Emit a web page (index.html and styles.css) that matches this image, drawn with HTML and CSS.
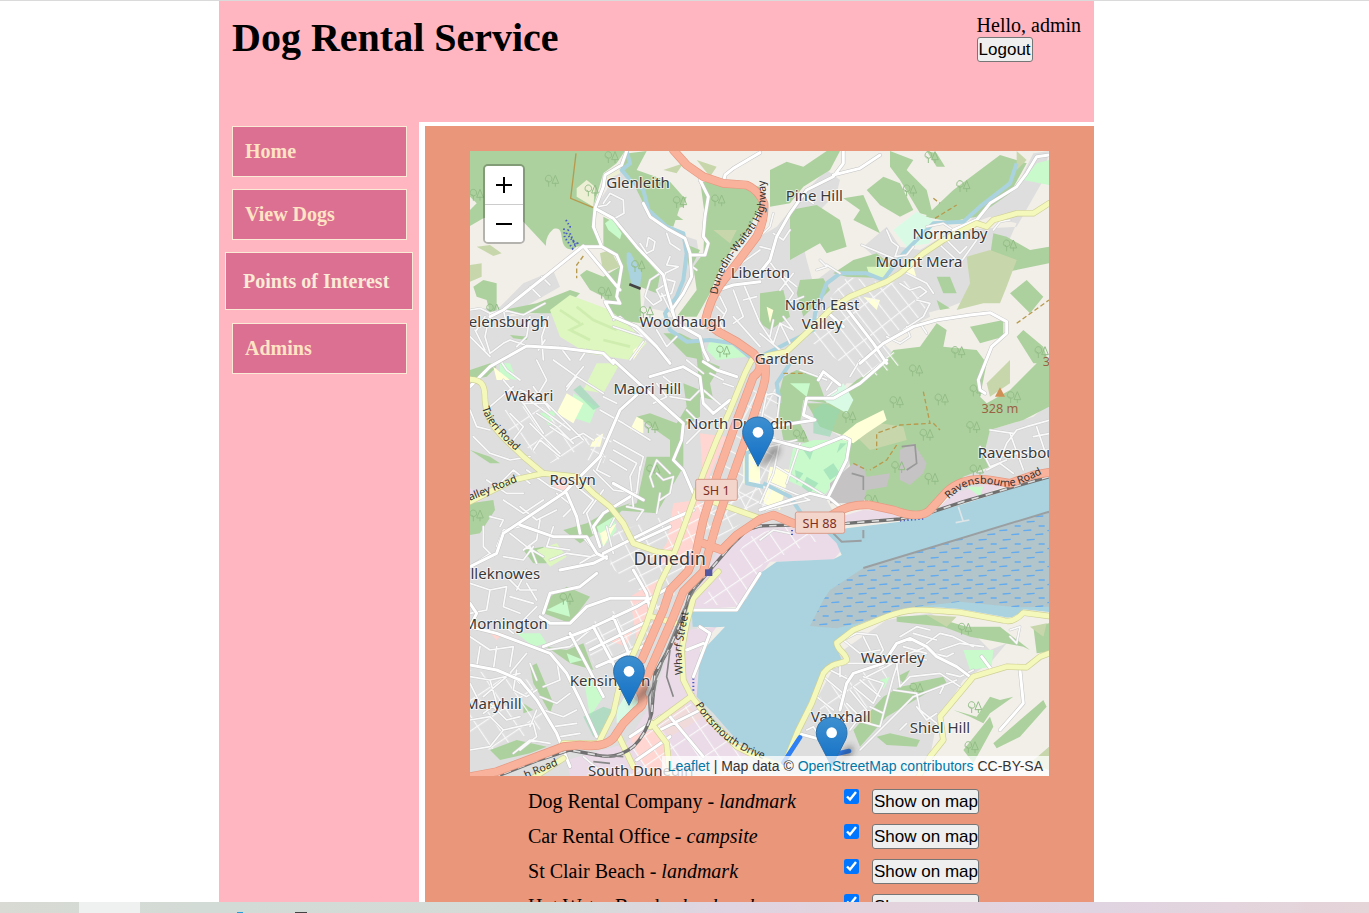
FILE: index.html
```html
<!DOCTYPE html>
<html lang="en">
<head>
<meta charset="utf-8">
<title>Dog Rental Service</title>
<link rel="stylesheet" href="styles.css">
</head>
<body>
<div class="viewport">
<div class="page">
  <header class="header">
    <h1 class="title">Dog Rental Service</h1>
    <form class="account">
      <span>Hello, admin</span>
      <button class="button" type="button">Logout</button>
    </form>
  </header>
  <nav class="nav">
    <a class="nav-item" href="#home">Home</a>
    <a class="nav-item" href="#dogs">View Dogs</a>
    <a class="nav-item nav-item-active" href="#poi">Points of Interest</a>
    <a class="nav-item" href="#admins">Admins</a>
  </nav>
  <main class="content">
    <div class="map">
      <svg class="tiles" viewBox="0 3 1737 1875" preserveAspectRatio="xMidYMid slice" role="img" aria-label="Map of Dunedin">
        <defs>
          <pattern id="gridA" width="62" height="36" patternUnits="userSpaceOnUse" patternTransform="rotate(-27)"><path class="block" d="M0 0H62M0 0V36"/></pattern>
          <pattern id="gridB" width="34" height="84" patternUnits="userSpaceOnUse" patternTransform="rotate(-38)"><path class="block" d="M0 0H34M0 0V84"/></pattern>
          <pattern id="gridC" width="48" height="44" patternUnits="userSpaceOnUse" patternTransform="rotate(-62)"><path class="block" d="M0 0H48M0 0V44"/></pattern>
          <pattern id="gridD" width="50" height="76" patternUnits="userSpaceOnUse" patternTransform="rotate(-34)"><path class="block" d="M0 0H50M0 0V76"/></pattern>
          <pattern id="mud" width="72" height="54" patternUnits="userSpaceOnUse"><path class="dash" d="M4 8l24-2M40 20l24-2M14 36l24-2M50 48h18"/></pattern>
          <linearGradient id="pinFill" x1="0" y1="0" x2="0" y2="1"><stop offset="0" stop-color="#3d8fcf"/><stop offset="1" stop-color="#126fc6"/></linearGradient>
          <filter id="soft" x="-50%" y="-50%" width="200%" height="200%"><feGaussianBlur stdDeviation="9"/></filter>
          <g id="pin">
            <path d="M0 0L34-50Q62-82 66-50Q58-20 0 0Z" fill="#222" opacity=".4" filter="url(#soft)"/>
            <path d="M0-150C-26-150-46-130-46-104C-46-94-43-84-38-76L0-2L38-76C43-84 46-94 46-104C46-130 26-150 0-150Z" fill="url(#pinFill)" stroke="#2c6fa8" stroke-width="3"/>
            <circle cy="-104" r="16" fill="#fff"/>
          </g>
          <g id="trees"><path d="M10 20V34M10 20L4 14M10 0C1 0-1 10 1 15C3 21 17 21 19 15C21 10 19 0 10 0ZM30 22V34M30 0L20 24H40Z"/></g>
          <g id="minor">
            <path d="M0 480L30 475 60 490 100 480 160 495 225 460M45 500L20 540M60 490L45 560 60 610 100 580 120 570 165 585M100 480L110 520 160 530 180 500 170 560 140 590M235 500L215 560 220 630M225 570L205 600M0 560L60 620M15 540L45 600M180 410L210 440M215 380L240 405M270 590L300 630M350 600L330 630M520 575L480 630M430 510L450 500 540 575 600 630M560 540L590 590 620 560M400 160L420 130 460 150 462 190 435 205 390 185M385 170L410 165 420 155M510 280L530 310 550 300 555 275 535 262 530 290M515 310L545 335M570 370L540 390 525 440 550 465 575 450 560 420 590 400 585 370 625 350 590 345 600 320M580 385L615 395 605 430 570 440M590 250L600 280 630 300M750 440L770 480 750 520 770 560 820 600M790 420L820 500 790 520M800 350L870 300M820 400L870 520M740 470L760 490M820 450L860 440M790 500L870 590M660 345L680 360M600 480L575 430M430 530L520 560"/>
            <g transform="translate(870 0)"><path d="M0 260L30 230 40 190M0 290L40 300M40 250L70 270 90 240M25 330L100 430 80 460 130 440M60 370L110 410M60 420L100 370M70 500L100 540 60 520 90 580M0 520L40 580 60 520M0 550L60 600M40 510L30 560M100 180L130 140 160 160 120 130M305 285L400 325M380 240L395 275 415 290 405 320 440 315 460 290M180 330L200 350 170 360M200 345L240 370M540 285L600 340 650 270M560 270L600 310 620 290M500 230L550 220 580 240M700 240L720 215 750 210M420 400L450 420 480 410 500 425 480 440M440 370L500 400 520 430M470 450L510 460 490 500 430 540M380 560L420 580 450 560 440 530M480 520L500 550"/></g>
            <g transform="translate(0 630)"><path d="M90 0L110 30 150 60M200 0L230 60 200 110 150 90M250 0L320 50 290 90M320 50L400 100M340 20L290 80M100 60L160 130 230 130M130 80L60 140M0 150L20 200 60 210M160 130L220 220M150 100L300 210M190 80L240 150M230 130L340 240M200 160L260 200 310 250M180 190L270 280M190 270L210 240 270 290M120 160L160 200 130 240M240 200L300 240 340 220 370 240M390 150L460 190 540 240M400 110L440 130M430 240L520 290 510 330M430 270L500 310 480 350M420 300L470 330M400 280L380 330 420 350M370 330L430 390 500 400 510 320M400 390L350 460 370 520M50 360L110 400 160 400M80 380L130 330 180 370M100 420L160 460 220 420M170 330L240 380 290 400M150 440L200 480 260 450M260 400L310 440 280 470M320 380L370 420 340 460M10 230L60 280 120 300 180 290M60 470L100 480 90 500M150 500L100 510 80 560M40 500L40 560 70 590M120 520L170 560 220 590M210 480L200 540 160 570M250 500L230 560 300 570M330 520L380 580 330 610M100 590L160 600 190 560M240 600L290 580 360 590 400 580M580 50L630 90M600 110L660 120 690 90M560 70L590 110 550 130M650 180L700 200 650 250M650 150L690 190M560 340L580 360 610 350 600 400 570 420M600 340L560 300 540 350 550 380M560 460L570 400M480 350L490 440M720 40L760 60M700 90L770 150M650 0L700 40M470 440L520 450 500 480M410 500L430 580M440 460L420 500M760 70L790 80M0 620L60 580M180 560L200 610"/></g>
            <g transform="translate(870 630)"><path d="M0 110L40 100 60 110 50 190M20 100L0 200M180 40L220 60 200 90M120 30L200 60M200 110L230 90M270 50L300 0M60 240L40 340 0 430M120 250L80 370M30 260L110 240M30 370L150 420 100 430 20 450M50 320L200 410M0 540L40 510 90 520M690 210L760 220M720 300L740 250 770 210 800 200 870 180M700 290L860 270M750 220L790 330M830 200L860 290M680 330L720 310 760 340M660 260L690 320 740 300M820 230L870 220"/></g>
            <g transform="translate(0 1260)"><path d="M0 40L60 60 110 50 100 110 150 130M60 60L50 120 0 130M100 10L150 60 200 60M170 0L140 60M120 80L190 100M0 200L60 240 130 230 120 290M30 230L20 290M80 230L70 300M170 250L120 310 150 340M180 280L200 330M0 320L60 330 150 310M60 330L80 400 40 430M140 300L130 360 170 380 200 360M0 450L60 440 100 480 60 530M100 480L190 460 200 500 150 540M60 530L0 540M60 400L110 450 150 440M210 380L260 400 300 370M220 420L280 440 320 420M250 470L320 460M270 500L330 490M220 350L270 330 260 270M230 240L300 230 360 180M130 550L180 510 240 520M200 420L180 470M0 340L30 400M160 150L200 110M200 90L170 40M80 150L130 190M340 560L400 610M110 320L40 380"/></g>
            <g transform="translate(870 1260)"><path d="M250 210L290 190 350 195 370 240 340 280M310 200L330 240M250 210L300 250 360 240M170 370L200 300 260 280 390 280M190 320L250 370M170 380L220 420M210 300L270 330M240 280L240 320M260 400L290 430M270 360L320 420M280 350L340 400 370 340 310 320M300 330L360 380M320 320L380 290 430 260 500 270M250 440L360 470 400 320 420 260 500 230M300 440L270 480M330 410L370 430M460 190L530 210M420 200L470 170 510 180M500 220L540 190 580 200 640 230M540 240L600 220 670 230M520 250L560 260 580 250M410 280L420 350 450 320 540 310 600 350M400 360L470 370 480 420 530 460M300 540L460 380 540 350 590 330M540 370L550 350M470 410L500 450 530 430M420 480L440 460M140 480L160 470 180 500M560 310L600 320M430 230L500 250M640 300L600 320M750 180L780 170 770 220 750 200"/></g>
          </g>
          <g id="local">
            <path d="M340 288L100 480 60 500M340 288L450 420M345 290L395 290 370 230 375 175 400 110 405 75 455 45 470 3M375 175L430 205 500 290 580 375 590 420 610 490M395 290L440 315 455 350 440 440 450 460 405 455 430 500 500 530 560 590 600 640M520 160L540 200 590 235 645 265 660 310 665 380 640 430 605 480 620 520 690 560 700 600 715 630M870 8L790 55 765 75 760 100M690 90L715 140 705 200 700 260 715 280 705 315 665 315M745 420L790 405 870 395M690 90L720 90M0 710L60 650 170 588 280 595 400 610 430 640M430 630L540 730 640 820 635 870 610 930 640 960 670 1030"/>
            <path d="M860 380L900 330 920 260 960 190 1010 120 1090 80 1120 40 1120 3M1090 75L1170 55 1230 15M1110 450L1210 580 1250 640M1060 475L1120 530M1170 640L1240 580 1330 530 1400 510 1500 495 1560 488 1610 515 1610 550 1565 590 1545 640 1525 690 1530 720 1545 730M1737 15L1700 20 1670 70 1640 110 1560 160 1520 210 1450 240"/>
            <path d="M1250 630L1170 700 1090 745 1010 745 1000 795 1035 810 900 830 870 850M1045 690L1060 665 1110 705M870 860L1020 900 1120 860 1140 870 1130 930 1075 1040M870 1080L1020 1030 1080 1045 1110 1070M500 735L450 780 420 850 390 920 330 980 280 1030 100 1150 80 1210 0 1250M290 1030L320 1100 330 1150M150 1125L250 1160 350 1160 380 1210 410 1225M480 1040L400 1090 370 1130 390 1190M410 1220L370 1240 270 1260M400 1210L600 1110 670 1080M490 1180L600 1130M430 1000L520 1050M540 680L640 650 690 680 700 760 730 790 780 750M700 635L740 660 800 680"/>
            <path d="M0 1430L80 1450 160 1480 240 1510 290 1570 330 1650 380 1760M0 1545L80 1560 150 1590 200 1650 260 1750 300 1850M210 1400L240 1420 300 1420 350 1370 420 1345 530 1345M220 1390L240 1330 330 1310 380 1270M220 1490L350 1440 500 1370 600 1310M0 1360L20 1390 0 1430M360 1500L520 1420M380 1550L540 1480M300 1450L400 1640M370 1430L440 1560M430 1400L480 1520M490 1260L530 1330 540 1380M480 1760L570 1700M500 1830L600 1760M570 1740L690 1680M600 1700L700 1820M655 1380L800 1380 870 1270M690 1430L720 1450 670 1580M650 1500L700 1480M985 1750L1040 1765 1110 1740M1110 1680L1130 1600 1150 1570 1240 1540 1280 1480 1320 1465 1370 1490 1400 1520 1460 1550 1500 1580M1650 1560L1660 1660 1590 1740M1535 1520L1565 1560"/>
          </g>
          <g id="secondary">
            <path d="M1737 160L1690 190 1640 190 1570 210 1550 230 1520 220 1460 250 1420 270 1360 310 1290 370 1250 395 1140 440 1080 480 1030 530 950 605 900 615 845 630 825 670 780 780 740 870 700 970 660 1080 620 1190 600 1240 570 1300 530 1420 500 1490 450 1600 430 1690 400 1750 385 1780 280 1780"/>
            <path d="M0 688C40 690 45 710 45 750C50 830 100 860 160 920L220 970 320 980 370 1030 420 1070 460 1120 490 1180 560 1205 600 1210M0 1055L130 990 220 970"/>
            <path d="M745 1265L670 1345 650 1420 635 1500 640 1590 665 1640 720 1710 800 1790 870 1825 940 1850 985 1740 1025 1660 1060 1570C1090 1530 1120 1545 1130 1530C1130 1510 1100 1500 1100 1478L1150 1440 1250 1400C1330 1370 1360 1380 1470 1387L1600 1411Q1630 1420 1660 1388Q1690 1392 1737 1398"/>
            <path d="M1340 1890L1380 1820 1420 1770 1410 1700 1510 1580 1610 1550 1670 1552 1710 1520 1737 1510M545 1400L635 1425M540 1730L665 1638M545 1720L590 1780 600 1880M440 1745L490 1850M715 1050L870 1105M180 1890L280 1825"/>
          </g>
          <g id="trunk">
            <path d="M610 0L650 45 700 80 760 100 830 105Q865 120 882 160Q885 210 860 260L800 340 750 405Q720 450 705 515L745 545 800 575 850 610Q890 650 850 680L790 840 740 980 700 1110 680 1200 655 1262 600 1320 580 1380 515 1530"/>
            <path d="M885 640Q890 680 880 710L830 860 780 1000 740 1120 720 1190 700 1265 640 1325 610 1400 540 1560 512 1630Q530 1660 500 1680L460 1720 430 1765Q400 1795 330 1785L280 1790 200 1820 80 1865 0 1880M700 1180L755 1200 800 1155 870 1108 910 1095 970 1120 1060 1115Q1120 1060 1200 1065L1270 1080Q1350 1110 1380 1080L1430 1025Q1480 980 1560 990L1620 1000 1690 975 1737 967"/>
          </g>
        </defs>

        <rect width="1737" height="1880" fill="#f2efe9"/>

        <!-- built-up land -->
        <g class="urban">
          <path d="M0 480L90 470 160 400 250 362 270 410 210 445 110 500 300 480 420 600 520 520 600 500 700 540 740 430 800 330 870 260 920 230 1010 120 1070 60 1110 90 1100 130 990 240 1010 330 1030 400 1000 420 1080 360 1140 370 1260 360 1370 350 1400 420 1370 460 1380 500 1300 540 1240 580 1300 640 1190 700 1130 700 1080 770 1060 830 1130 870 1140 940 1070 1050 1110 1120 870 1140 830 1340 680 1400 700 1640 870 1820 990 1740 1120 1500 1250 1410 1380 1390 1440 1420 1500 1440 1560 1500 1610 1480 1560 1540 1480 1590 1400 1720 1370 1870 0 1880Z"/>
          <path d="M370 180L410 120 440 50 500 100 530 170 590 240 680 270 690 330 665 400 610 490 520 470 530 410 570 370 480 270 430 210ZM1180 290L1250 230 1290 290 1350 300 1450 240 1560 200 1640 220 1600 310 1510 340 1540 430 1440 470 1330 500 1280 380ZM1560 840L1690 800 1737 760 1737 960 1600 990 1390 1050 1400 1020 1480 970 1560 960 1540 900ZM1470 240L1640 230 1720 90 1737 3 1690 10 1640 110 1530 180Z"/>
        </g>
        <path d="M870 1140L1010 1125 1380 1095 1600 1010 1737 970 1600 990 1450 1030 1390 1090 1180 1080 1110 1100ZM750 1190L870 1120 1080 1150 1115 1200 1090 1230 900 1235 800 1370 660 1380 670 1340ZM650 1440L740 1430 690 1500 680 1640 720 1700 840 1820 620 1878 300 1878 290 1830 470 1780 550 1650 600 1490ZM0 1015L40 1030 30 1060 0 1060Z" fill="#ebdbe8"/>
        <path d="M610 1060L680 1050 720 1080 680 1230 540 1250 590 1180ZM480 1340L580 1280 550 1380 500 1470ZM690 850L770 860 700 1020ZM480 1760L580 1730 600 1878 540 1878 500 1810ZM410 1470L490 1430 470 1490ZM250 1000L290 990 290 1020 260 1020ZM60 1450L100 1450 80 1470Z" fill="#ffd6d1"/>
        <path d="M560 1720L640 1660 700 1700 600 1760Z" fill="#f1dada"/>

        <!-- woodland -->
        <g class="wood">
          <path d="M0 3H465L440 40 400 70 370 170 375 230 395 290 350 285 320 290Q310 300 300 298C260 290 290 225 250 237Q225 260 228 288L160 215 100 190 40 205 0 228V180L20 160 0 140ZM400 200L430 215 570 375 560 430 510 410 515 520 440 510 400 440 360 420 330 375 350 360 400 380 450 350 440 315 400 290ZM100 480L200 460 300 420 330 430 270 490 140 490ZM10 410L40 390 80 400 80 480 60 490 50 450 20 440ZM475 10L530 3 500 60 600 95 640 140 610 230 560 220 520 160 490 100 450 50ZM560 150L650 140 640 170 600 180 640 210 580 210ZM690 90L720 90 870 110 870 170 830 250 760 330 720 430 680 500 620 500 680 420 670 350 700 310 705 200ZM630 550L690 580 700 630 650 620 580 550ZM0 660L60 640 80 650 50 680 0 690ZM640 280L690 300 660 360ZM120 555L175 560 170 570 130 565Z"/>
          <path d="M900 60L950 35 1000 50 1070 3 1110 3 1080 60 1000 110 960 160 900 170ZM960 180L1040 165 1110 210 1130 290 1070 310 1050 280 960 330ZM1120 145L1180 135 1230 250 1150 210 1170 180ZM1190 120L1240 80 1290 100 1330 180 1290 200 1230 165ZM1260 3L1330 30 1310 60 1370 120 1390 200 1350 190 1290 90 1260 50ZM1365 200L1450 120 1590 15 1670 40 1620 130 1520 200 1440 215ZM1370 3L1400 10 1425 50 1400 50ZM1090 370L1150 330 1220 310 1270 350 1250 385 1130 380ZM1570 250L1610 260 1680 300 1737 290 1737 340 1590 370 1560 320ZM1400 380L1440 380 1460 430 1420 430ZM1620 430L1670 390 1720 440 1680 490ZM1400 450L1440 475 1410 480ZM1500 530L1600 510 1600 560 1530 580ZM1640 560L1660 540 1720 590 1737 640 1690 640ZM990 390L1060 385 1080 420 1000 500 980 430ZM870 430L940 420 960 500 900 540 870 520ZM1270 600L1350 590 1400 520 1430 540 1420 590 1520 600 1550 640 1530 740 1550 760 1620 720 1700 640 1737 640 1737 770 1660 810 1560 840 1540 920 1560 950 1480 980 1400 1080 1330 1090 1190 1050 1120 1030 1140 950 1130 860 1050 830 1010 760 1080 760 1160 690 1240 640Z"/>
          <path d="M940 680L980 660 1040 680 1070 760 1000 750 990 820 1020 880 940 870 920 760ZM680 620L750 650 720 700 730 750 690 740ZM640 700L690 720 690 800 640 830 640 950 560 1090 430 1080 500 1060 530 920 600 920 600 870 500 800 540 790 620 820 650 770ZM280 1140L350 1120 420 1080 480 1060 380 1150 330 1180ZM0 1060L70 1050 75 1080 30 1150 0 1155ZM0 900L60 920 90 940 60 940ZM160 1200L220 1190 230 1240 190 1240ZM240 1340L290 1310 360 1340 300 1420 220 1390ZM180 1550L200 1540 250 1660 240 1690 190 1600ZM230 1490L290 1500 340 1480 370 1560 300 1540ZM60 1800L140 1770 230 1790 180 1810 90 1830ZM160 1660L190 1680 160 1690Z"/>
          <path d="M1150 1740L1240 1640 1290 1610 1400 1590 1420 1600 1250 1700 1170 1790ZM1220 1760L1260 1750 1350 1770 1340 1790 1250 1785ZM1320 1600L1420 1580 1430 1600 1350 1620ZM1280 1580L1320 1560 1300 1600ZM1280 1400L1370 1395 1490 1430 1590 1430 1680 1500 1660 1490 1500 1460 1420 1430 1280 1415ZM1450 1680L1520 1700 1560 1640 1590 1650 1630 1640 1560 1690 1540 1720 1500 1700ZM1570 1780L1650 1710 1720 1650 1730 1670 1650 1760 1580 1795ZM1480 1800L1560 1700 1570 1730 1510 1840ZM1690 1430L1737 1420V1505L1700 1510Z"/>
        </g>
        <path d="M20 290L60 285 95 310 70 318ZM0 345L35 340 35 380 0 395ZM390 310L420 300 450 350 400 370ZM580 60L640 40 620 70ZM680 30L740 50 720 80ZM730 240L800 240 780 280ZM1490 320L1560 300 1640 330 1610 410 1590 460 1540 460 1460 480 1500 400ZM1640 3L1670 30 1640 60ZM1160 860L1230 820 1300 830 1310 870 1200 900ZM1550 700L1620 630 1620 700 1560 740ZM1680 1430L1730 1420 1720 1460ZM1370 1395L1460 1400 1430 1430ZM1680 1840L1737 1790V1860Z" fill="#c8d7ab"/>
        <path d="M240 480L300 435 420 480 480 530 530 580 480 630 350 610 270 560ZM340 720L380 640 450 640 400 730ZM200 1200L260 1180 290 1220 240 1250ZM1190 350L1260 350 1260 385 1200 380Z" fill="#def6c0"/>
        <path d="M270 480L330 520M320 470L370 510 440 540M340 520L300 540 360 570M400 570L480 590" fill="none" stroke="#cfedae" stroke-width="8"/>
        <path d="M405 220L425 205 455 250 450 268 415 240ZM720 570L760 565 830 620 740 630 710 600ZM310 730L380 770 360 820 300 800ZM210 790L260 780 240 830ZM90 640L120 640 140 690 90 680ZM970 890L1030 870 1140 870 1120 960 1060 1040 950 990ZM960 700L1020 700 1010 740ZM1660 90L1700 40 1737 30V105ZM1490 1010L1540 1010 1530 1040ZM140 1450L210 1450 230 1480 190 1490ZM230 1380L290 1350 300 1400ZM340 1580L380 1600 400 1640 360 1700ZM1480 1500L1570 1500 1565 1550 1500 1560ZM1230 1590L1260 1580 1240 1620ZM290 1510L340 1530 300 1540ZM380 1130L430 1100 440 1140 400 1190Z" fill="#c8facc"/>
        <path d="M1270 240L1340 185 1390 210 1380 280 1310 290ZM1060 750L1120 700 1150 750 1130 790ZM440 1680L470 1630 510 1660 500 1690 440 1720Z" fill="#d9fbe6"/>
        <path d="M310 720L330 705 390 770 370 780ZM1030 780L1060 760 1110 780 1080 860 1030 850ZM340 1700L400 1670 430 1680 410 1750 370 1760ZM1060 960L1090 940 1110 970 1080 990ZM1000 900L1030 900 1020 930ZM975 960L1000 970 980 1000ZM1110 880L1130 880 1100 910ZM1010 980L1045 1000 1020 1030 995 1010Z" fill="#94d8b3" opacity=".6"/>
        <path d="M1110 860L1160 820 1240 780 1250 810 1190 850 1150 880 1120 870ZM260 790L290 730 340 760 310 820ZM370 870L400 850 390 890 360 890ZM490 600L530 570 490 630ZM70 650L120 690 80 690ZM500 800L520 810 520 850 480 840ZM820 850L870 840 870 1010 820 1000ZM390 1150L440 1120 400 1190ZM1180 440L1230 450 1220 480ZM890 470L910 480 900 520ZM1300 370L1330 350 1340 385ZM900 950L960 960 930 1080 880 1060Z" fill="#ffffd8"/>
        <path d="M320 115L350 90 375 110 370 170 320 140ZM400 70L450 40 450 70 410 90Z" fill="#eef0d5"/>
        <path d="M1080 1000L1150 940 1180 950 1190 980 1260 970 1250 1010 1190 1020 1180 1060 1080 1060ZM1290 900L1330 880 1370 940 1360 970 1320 1005 1290 990Z" fill="#c5c3c3"/>
        <path d="M1295 890L1335 885 1340 940 1310 960M1145 970L1180 980 1180 1020" fill="none" stroke="#999" stroke-width="5"/>

        <!-- street grids -->
        <path d="M1060 470L1130 380 1250 400 1330 390 1380 450 1350 500 1240 570 1300 640 1190 690 1000 560Z" fill="url(#gridB)"/>
        <path d="M430 1150L720 1050 900 1000 870 1080 700 1200 520 1480 370 1540 330 1440 520 1330 420 1250Z" fill="url(#gridA)"/>
        <path d="M850 700L930 720 900 1080 680 1100 720 980ZM380 850L430 860 400 940 350 930Z" fill="url(#gridC)"/>
        <path d="M840 1160L960 1120 1050 1170 880 1240 800 1370 690 1360ZM490 1780L660 1660 820 1800 820 1878 480 1878Z" fill="url(#gridD)"/>
        <path d="M60 790L200 760 370 880 240 940 180 900ZM1050 1600L1240 1540 1260 1620 1130 1720 1050 1700ZM0 1560L180 1590 230 1730 60 1800 0 1780Z" fill="url(#gridD)"/>

        <!-- water -->
        <g class="water">
          <path d="M1737 980L1640 1012 1480 1062 1290 1115 1130 1135 1070 1150 1100 1180 1115 1215 1090 1228 920 1235 870 1270 830 1345 800 1375 665 1382 668 1430 735 1432 765 1430 690 1510 680 1640 730 1690 800 1770 870 1815 935 1838 980 1740 1020 1650 1060 1560 1115 1530 1095 1475 1150 1430 1250 1390C1330 1365 1360 1370 1470 1377L1600 1400Q1630 1410 1660 1378L1737 1386Z"/>
          <path d="M470 310Q480 300 488 320L515 370 510 410 485 405 470 340Z"/>
        </g>
        <path class="river" d="M470 5L480 40 455 60 480 90 520 120 535 180 590 230 640 250 650 310 640 390 620 440 585 490 600 540 650 575 720 570 790 580 850 630 930 590 1030 540 1035 490 1070 400 1110 370 1190 370 1240 390 1300 310 1390 220 1480 215 1530 170 1620 100 1640 40M960 640L920 700 930 760M880 1010L830 1000 830 910 870 890M880 1000L960 1040 1000 1100"/>
        <path d="M1180 1254L1737 1085V1370L1640 1372 1470 1355 1300 1375 1220 1405 1100 1435 1020 1428 1060 1350 1080 1320Z" fill="#b2c5ca"/>
        <path d="M1180 1254L1737 1085V1370L1640 1372 1470 1355 1300 1375 1220 1405 1100 1435 1020 1428 1060 1350 1080 1320Z" fill="url(#mud)"/>
        <path d="M1180 1254L1737 1085M1090 1150L1115 1175 1175 1172M1180 1165V1140" fill="none" stroke="#9a9fa2" stroke-width="6"/>
        <path d="M1465 1070L1480 1115M1457 1118L1498 1110" fill="none" stroke="#dde5e8" stroke-width="5"/>

        <!-- tracks and tree marks -->
        <g class="track">
          <path d="M318 10L302 145 375 175" stroke-dasharray="none"/>
          <path d="M340 318L320 345 320 385M1360 725L1380 820 1290 825 1220 850 1220 900M1280 885L1250 930 1200 960M1390 145L1410 160M1395 205L1460 165M1640 520L1737 450M940 670L1010 670M1390 820L1410 840M1150 940L1190 960"/>
        </g>
        <g class="trees">
          <use href="#trees" x="226" y="76"/><use href="#trees" x="0" y="118"/><use href="#trees" x="405" y="5"/><use href="#trees" x="385" y="412"/><use href="#trees" x="485" y="332"/><use href="#trees" x="510" y="470"/><use href="#trees" x="725" y="135"/><use href="#trees" x="610" y="140"/><use href="#trees" x="740" y="588"/><use href="#trees" x="345" y="105"/>
          <use href="#trees" x="1365" y="5"/><use href="#trees" x="1460" y="92"/><use href="#trees" x="1600" y="270"/><use href="#trees" x="1445" y="590"/><use href="#trees" x="1318" y="645"/><use href="#trees" x="1260" y="740"/><use href="#trees" x="1395" y="732"/><use href="#trees" x="1500" y="705"/><use href="#trees" x="1612" y="725"/><use href="#trees" x="1118" y="785"/><use href="#trees" x="1350" y="838"/><use href="#trees" x="1490" y="815"/><use href="#trees" x="1265" y="935"/><use href="#trees" x="1365" y="970"/><use href="#trees" x="1185" y="1035"/><use href="#trees" x="970" y="840"/><use href="#trees" x="1500" y="945"/><use href="#trees" x="1695" y="590"/><use href="#trees" x="1300" y="105"/>
          <use href="#trees" x="0" y="1080"/><use href="#trees" x="270" y="1330"/><use href="#trees" x="525" y="815"/><use href="#trees" x="530" y="945"/><use href="#trees" x="1320" y="1600"/><use href="#trees" x="1495" y="1655"/><use href="#trees" x="1485" y="1775"/><use href="#trees" x="1465" y="1420"/><use href="#trees" x="50" y="462"/>
        </g>
        <g fill="none" stroke="#4759c4" stroke-width="6" stroke-dasharray="4 7"><path d="M288 210L300 230 290 250 310 275 322 280 308 296 284 262 282 235M300 250L318 290M670 1585V1630M1290 1112L1360 1106M966 1140V1155"/></g>
        <path d="M478 403L512 416" stroke="#444" stroke-width="8"/>
        <path d="M1575 740L1590 712 1605 740Z" fill="#d08f55"/>

        <!-- roads, drawn as casing then fill -->
        <use href="#minor" class="road minor-case"/><use href="#minor" class="road minor-fill"/>
        <use href="#local" class="road local-case"/><use href="#local" class="road local-fill"/>
        <use href="#secondary" class="road second-case"/><use href="#secondary" class="road second-fill"/>
        <g fill="none">
          <path class="rail" d="M1737 980L1640 1008 1480 1055 1380 1088 1290 1107 1130 1120 870 1128 830 1140 780 1190 720 1260 660 1330 640 1400 600 1490 555 1570 545 1690Q530 1750 490 1790Q440 1830 380 1815L300 1800 200 1832 90 1875"/>
          <path class="rail-dash" d="M1737 980L1640 1008 1480 1055 1380 1088 1290 1107 1130 1120 870 1128 830 1140 780 1190 720 1260 660 1330 640 1400 600 1490 555 1570 545 1690Q530 1750 490 1790Q440 1830 380 1815L300 1800 200 1832 90 1875"/>
          <path d="M690 1290L640 1380 590 1500 570 1560 535 1640 540 1710M600 1500L590 1580 610 1640M620 1390L600 1450M560 1590L545 1660M380 1815L460 1820M370 1835L420 1840" stroke="#888" stroke-width="5"/>
        </g>
        <use href="#trunk" class="road trunk-case"/><use href="#trunk" class="road trunk-fill"/>
        <rect x="705" y="1258" width="22" height="20" fill="#5358a0"/>
        <path d="M990 1762L940 1838M1085 1815L1137 1803" stroke="#2f80f5" stroke-width="14" stroke-linecap="round"/>

        <g class="shield"><rect x="677" y="988" width="125" height="63" rx="6"/><rect x="976" y="1086" width="148" height="64" rx="6"/></g>
        <g class="shield-text"><text x="739" y="1034">SH 1</text><text x="1049" y="1133">SH 88</text></g>

        <!-- place names -->
        <g class="place">
          <text x="504" y="115">Glenleith</text><text x="117" y="531">elensburgh</text><text x="638" y="531">Woodhaugh</text><text x="871" y="384">Liberton</text>
          <text x="1033" y="153">Pine Hill</text><text x="1440" y="266">Normanby</text><text x="1347" y="350">Mount Mera</text><text x="1056" y="479">North East</text><text x="1056" y="538">Valley</text><text x="943" y="641">Gardens</text>
          <text x="177" y="754">Wakari</text><text x="532" y="731">Maori Hill</text><text x="809" y="838">North Dunedin</text><text x="308" y="1004">Roslyn</text><text x="1676" y="924">Ravensbourne</text>
          <text x="106" y="1286">lleknowes</text><text x="107" y="1438">Mornington</text><text x="420" y="1608">Kensington</text><text x="70" y="1676">Maryhill</text><text x="512" y="1877">South Dunedin</text>
          <text x="1268" y="1540">Waverley</text><text x="1112" y="1717">Vauxhall</text><text x="1410" y="1748">Shiel Hill</text>
          <text class="city" x="599" y="1244">Dunedin</text>
        </g>
        <text class="peak" x="1590" y="789">328 m</text><text class="peak" x="1740" y="648">39</text>
        <g class="street">
          <path id="sHighway" d="M742 434C755 350 800 310 850 240C875 205 895 180 884 80" fill="none"/>
          <text><textPath href="#sHighway">Dunedin-Waitati Highway</textPath></text>
          <path id="sTaieri" d="M36 774C50 820 80 850 150 915" fill="none"/>
          <text><textPath href="#sTaieri">Taieri Road</textPath></text>
          <path id="sValley" d="M0 1052L150 992" fill="none"/>
          <text><textPath href="#sValley">alley Road</textPath></text>
          <path id="sRavens" d="M1436 1048C1500 985 1550 1000 1600 1010C1640 1010 1670 995 1730 964" fill="none"/>
          <text><textPath href="#sRavens">Ravensbourne Road</textPath></text>
          <path id="sWharf" d="M638 1574L634 1500 657 1380" fill="none"/>
          <text><textPath href="#sWharf">Wharf Street</textPath></text>
          <path id="sPorts" d="M676 1665C730 1750 790 1800 890 1830" fill="none"/>
          <text><textPath href="#sPorts">Portsmouth Drive</textPath></text>
          <path id="sSouth" d="M168 1886L290 1834" fill="none"/>
          <text><textPath href="#sSouth">h Road</textPath></text>
        </g>
        <use href="#pin" x="864" y="951"/><use href="#pin" x="477" y="1668"/><use href="#pin" x="1085" y="1852"/>
      </svg>
      <div class="zoom">
        <button class="zoom-button" type="button" aria-label="Zoom in"><svg viewBox="0 0 16 16"><path d="M0 8H16M8 0V16"/></svg></button>
        <button class="zoom-button" type="button" aria-label="Zoom out"><svg viewBox="0 0 16 16"><path d="M0 8H16"/></svg></button>
      </div>
      <div class="attribution"><a href="#leaflet">Leaflet</a> | Map data © <a href="#osm">OpenStreetMap contributors</a> CC-BY-SA</div>
    </div>
    <ul class="places">
      <li class="row"><label for="p1">Dog Rental Company - <i>landmark</i></label><input class="tick" id="p1" type="checkbox" checked><button class="button" type="button">Show on map</button></li>
      <li class="row"><label for="p2">Car Rental Office - <i>campsite</i></label><input class="tick" id="p2" type="checkbox" checked><button class="button" type="button">Show on map</button></li>
      <li class="row"><label for="p3">St Clair Beach - <i>landmark</i></label><input class="tick" id="p3" type="checkbox" checked><button class="button" type="button">Show on map</button></li>
      <li class="row"><label for="p4">Hot Water Beach - <i>landmark</i></label><input class="tick" id="p4" type="checkbox" checked><button class="button" type="button">Show on map</button></li>
    </ul>
  </main>
</div>
</div>
<footer class="taskbar"><span class="task-active"></span><span class="task-blue"></span><span class="task-dark"></span></footer>
</body>
</html>
```

FILE: styles.css
```css
* { box-sizing: border-box; }
body {
  margin: 0;
  height: 100vh;
  display: flex;
  flex-direction: column;
  overflow: hidden;
  background: #fff;
  color: #000;
  font: 20px/24px "Liberation Serif", serif;
}
.viewport {
  flex: 1;
  min-height: 0;
  overflow: hidden;
  border-top: 1px solid #dadada;
}
.page {
  display: grid;
  grid-template-columns: 200px 1fr;
  grid-template-rows: auto 1fr;
  min-height: 100%;
  max-width: 875px;
  margin: 0 20% 0 16%;
}
.header {
  grid-column: 1 / 3;
  display: flex;
  justify-content: space-between;
  align-items: flex-start;
  min-height: 121px;
  padding: 12px 13px;
  background: #ffb6c1;
}
.title { margin: 0; font-size: 40px; line-height: 50px; }
.account { display: flex; flex-direction: column; align-items: flex-start; }
.button {
  height: 25px;
  padding: 0 1px;
  border: 1px solid #767676;
  border-radius: 3px;
  background: #efefef;
  color: #000;
  font: 17px/22px "Liberation Sans", sans-serif;
  white-space: nowrap;
}
.nav {
  display: flex;
  flex-direction: column;
  gap: 12px;
  padding: 4px 12px 0 13px;
  background: #ffb6c1;
}
.nav-item {
  padding: 12px 12px 13px;
  border: 1px solid #faebd7;
  background: #db7093;
  color: #ffe4c4;
  font-weight: bold;
  text-decoration: none;
}
.nav-item-active { margin: 0 -6px 1px -7px; padding: 16px 17px; color: #faebd7; }
.content {
  margin: 4px 0 0 6px;
  padding: 25px 45px 0;
  background: #e9967a;
}
.map { position: relative; height: 625px; overflow: hidden; }
.tiles { display: block; width: 100%; height: 100%; }
.zoom {
  position: absolute;
  top: 13px;
  left: 13px;
  border: 2px solid rgba(0, 0, 0, .25);
  border-radius: 5px;
  background-clip: padding-box;
}
.zoom-button {
  display: grid;
  place-items: center;
  width: 38px;
  height: 38px;
  padding: 0;
  border: 0;
  border-radius: 3px 3px 0 0;
  background: #fff;
}
.zoom-button + .zoom-button { border-top: 1px solid #ccc; border-radius: 0 0 3px 3px; }
.zoom-button svg { width: 16px; height: 16px; fill: none; stroke: #000; stroke-width: 2; }
.attribution {
  position: absolute;
  right: 0;
  bottom: 0;
  padding: 0 6px;
  background: rgba(255, 255, 255, .75);
  color: #333;
  font: 14px/20px "Liberation Sans", sans-serif;
  white-space: nowrap;
}
.attribution a { color: #0078a8; text-decoration: none; }
.places {
  display: grid;
  gap: 10px;
  margin: 0;
  padding: 13px 70px 0 58px;
  list-style: none;
}
.row { display: grid; grid-template-columns: 1fr 15px 107px; column-gap: 13px; }
.tick { width: 15px; height: 15px; margin: 0; accent-color: #0075ff; }
.taskbar {
  display: flex;
  height: 11px;
  background: linear-gradient(90deg, #d8dad3, #d3dbd6 15%, #d5dcd8 40%, #dfd4e2 53%, #e3d3dc 64%, #e1d4e2 80%, #e5d4d8);
}
.task-active { width: 61px; margin-left: 79px; background: #eff1f0; }
.task-blue { width: 6px; height: 1px; margin: 10px 0 0 97px; background: #2a9bd8; }
.task-dark { width: 12px; height: 1px; margin: 10px 0 0 52px; background: #444; }

.urban { fill: #dedede; }
.wood { fill: #add19e; }
.water { fill: #aad3df; }
.river { fill: none; stroke: #aad3df; stroke-width: 12; stroke-linejoin: round; }
.block { fill: none; stroke: #f8f8f8; stroke-width: 7; }
.dash { fill: none; stroke: #62abee; stroke-width: 4; }
.track { fill: none; stroke: #b79a4e; stroke-width: 4; stroke-dasharray: 14 8; }
.trees { fill: none; stroke: #93bd87; stroke-width: 3; }
.road { fill: none; stroke-linejoin: round; stroke-linecap: round; }
.minor-case { stroke: #cdcdcd; stroke-width: 8; }
.minor-fill { stroke: #fafafa; stroke-width: 5; }
.local-case { stroke: #c4c4c4; stroke-width: 12; }
.local-fill { stroke: #fff; stroke-width: 9; }
.second-case { stroke: #cfd197; stroke-width: 19; }
.second-fill { stroke: #f5f8bb; stroke-width: 15; }
.trunk-case { stroke: #e79a82; stroke-width: 26; }
.trunk-fill { stroke: #f9b29c; stroke-width: 22; }
.rail { stroke: #707070; stroke-width: 10; }
.rail-dash { stroke: #ddd; stroke-width: 5; stroke-dasharray: 22 22; }
.shield rect { fill: #f4d5cc; stroke: #d99c8b; stroke-width: 3; }
.shield-text { fill: #7d2f23; font: 38px "Noto Sans", sans-serif; text-anchor: middle; }
.place {
  fill: #3a3a3a;
  stroke: rgba(255, 255, 255, .65);
  stroke-width: 6;
  stroke-linejoin: round;
  paint-order: stroke;
  font: 45px "Noto Sans", sans-serif;
  text-anchor: middle;
}
.city { font-size: 54px; }
.peak { fill: #9a6244; font: 38px "Noto Sans", sans-serif; text-anchor: middle; }
.street { fill: #333; font: 32px "Noto Sans", sans-serif; }
```
